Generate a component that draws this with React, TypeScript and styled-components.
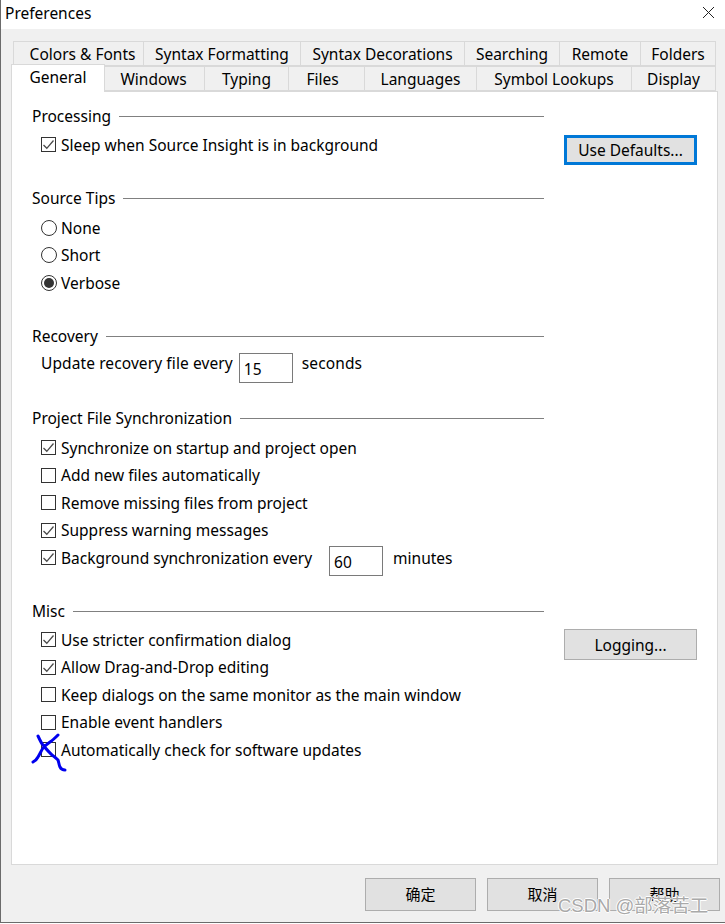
import React from "react";
import styled, { createGlobalStyle } from "styled-components";

const Global = createGlobalStyle`
  html, body { margin: 0; padding: 0; background: #fff; }
  * { box-sizing: border-box; }
`;

const Win = styled.div`
  width: 725px; height: 923px; position: relative; overflow: hidden;
  display: flex; flex-direction: column;
  font-family: "Noto Sans", "Noto Sans CJK SC", sans-serif;
  font-size: 15.5px; color: #000;
  border-left: 1px solid #6b6b6b;
  border-bottom: 1px solid #6b6b6b;
  background: #f0f0f0;
`;
const TitleBar = styled.div`
  height: 29px; background: #fff; display: flex; align-items: center;
  justify-content: space-between; padding: 0 10px 4px 4px;
`;
const Body = styled.div`
  flex: 1; display: flex; flex-direction: column; padding: 12px 0 0 10px;
`;
const TabRow = styled.div<{ $indent: number }>`
  display: flex; height: 25px; margin-left: ${(p) => p.$indent}px; position: relative;
`;
const Tab = styled.div<{ $w: number; $active?: boolean; $nudge?: number }>`
  width: ${(p) => p.$w}px; display: flex; align-items: center; justify-content: center;
  background: ${(p) => (p.$active ? "#fff" : "#f0f0f0")};
  border: 1px solid #d9d9d9; border-left-width: ${(p) => (p.$active ? 1 : 0)}px;
  border-bottom-width: ${(p) => (p.$active ? 0 : 1)}px;
  padding-left: ${(p) => Math.max(p.$nudge ?? 0, 0)}px;
  padding-right: ${(p) => Math.max(-(p.$nudge ?? 0), 0)}px;
  ${(p) => (p.$active ? "margin-top: -2px; height: 28px; z-index: 2; padding-bottom: 4px;" : "")}
  &:first-child { border-left-width: 1px; }
`;
const Panel = styled.div`
  width: 707px; height: 774px; background: #fff; border: 1px solid #d9d9d9;
  padding: 13px 0 0 20px; display: flex; flex-direction: column;
`;
const Section = styled.section<{ $top: number }>`
  display: grid; grid-template-columns: 512px 133px; grid-template-rows: 22px auto; column-gap: 20px;
  margin-top: ${(p) => p.$top}px; align-items: start;
`;
const Heading = styled.div`
  display: flex; align-items: center; gap: 8px; height: 22px;
  &::after { content: ""; flex: 1; height: 1px; background: #808080; }
`;
const Rows = styled.div<{ $pad: number }>`
  grid-column: 1; padding: ${(p) => p.$pad}px 0 0 9px;
`;
const Row = styled.div`
  height: 27.5px; display: flex; align-items: center; gap: 5px; position: relative;
  white-space: nowrap;
`;
const FieldRow = styled.div`
  height: 30px; display: flex; align-items: flex-start; gap: 5px; line-height: 20px;
  white-space: nowrap; letter-spacing: 0.1px;
`;
const Check = styled.span`
  width: 15px; height: 15px; border: 1px solid #333; background: #fff; flex: none;
  display: inline-flex; align-items: center; justify-content: center; position: relative;
`;
const Radio = styled.span<{ $on?: boolean }>`
  width: 16px; height: 16px; border: 1px solid #333; border-radius: 50%; background: #fff; flex: none;
  margin-right: -1px;
  display: inline-flex; align-items: center; justify-content: center;
  &::after { content: ""; width: 10px; height: 10px; border-radius: 50%; background: ${(p) => (p.$on ? "#333" : "transparent")}; }
`;
const Field = styled.span<{ $gap: number; $after: number; $drop?: number }>`
  width: 54px; height: 30px; border: 1px solid #7a7a7a; background: #fff; flex: none;
  display: inline-flex; align-items: center; padding: 2px 0 0 4px;
  margin: ${(p) => p.$drop ?? 0}px ${(p) => p.$after}px 0 ${(p) => p.$gap}px;
`;
const Button = styled.div<{ $focus?: boolean; $top?: number }>`
  grid-column: 2; grid-row: 1 / span 2; width: 133px; height: ${(p) => (p.$focus ? 30 : 31)}px;
  margin-top: ${(p) => p.$top ?? 0}px;
  background: #e1e1e1; border: ${(p) => (p.$focus ? "3px solid #0078d7" : "1px solid #adadad")};
  display: flex; align-items: center; justify-content: center;
`;
const Footer = styled.div`
  display: flex; gap: 11px; justify-content: flex-end; padding: 13px 5px 0 0;
`;
const DialogButton = styled.div`
  width: 111px; height: 33px; background: #e1e1e1; border: 1px solid #adadad;
  display: flex; align-items: center; justify-content: center; font-size: 15px;
  padding-bottom: 3px;
  font-family: "Noto Sans CJK SC", sans-serif;
`;
const Watermark = styled.div`
  position: absolute; left: 557px; top: 891px; font-size: 18.5px; color: #a9a9a9; white-space: nowrap;
  font-family: "Liberation Sans", "Noto Sans CJK SC", sans-serif;
  text-shadow: 1px 0 0 #fff, -1px 0 0 #fff, 0 1px 0 #fff, 0 -1px 0 #fff;
`;
const Scribble = styled.svg`
  position: absolute; left: -9px; top: -8px; overflow: visible; pointer-events: none;
`;
const Tick = () => (
  <svg width="13" height="13" viewBox="0 0 13 13">
    <path d="M1.5 7 L4.8 10.3 L11.5 2.5" fill="none" stroke="#4a4a4a" strokeWidth="1.3" />
  </svg>
);

const back: [string, number, number?][] = [["Colors & Fonts", 131, 8], ["Syntax Formatting", 157], ["Syntax Decorations", 164], ["Searching", 95], ["Remote", 81], ["Folders", 75]];
const front: [string, number, number?][] = [["General", 94], ["Windows", 100, -2], ["Typing", 84], ["Files", 76, -8], ["Languages", 112], ["Symbol Lookups", 155], ["Display", 84]];

const CheckRow = ({ on, children }: { on?: boolean; children: React.ReactNode }) => (
  <Row><Check>{on && <Tick />}</Check><span>{children}</span></Row>
);
const RadioRow = ({ on, children }: { on?: boolean; children: React.ReactNode }) => (
  <Row><Radio $on={on} /><span>{children}</span></Row>
);

export default function App() {
  return (
    <Win>
      <Global />
      <TitleBar>
        <span>Preferences</span>
        <svg width="13" height="13" viewBox="0 0 13 13"><path d="M1 1 L12 12 M12 1 L1 12" stroke="#222" strokeWidth="1" fill="none" /></svg>
      </TitleBar>
      <Body>
        <TabRow $indent={2}>{back.map(([t, w, n]) => <Tab key={t} $w={w} $nudge={n}>{t}</Tab>)}</TabRow>
        <TabRow $indent={0}>{front.map(([t, w, n], i) => <Tab key={t} $w={w} $nudge={n} $active={i === 0}>{t}</Tab>)}</TabRow>
        <Panel>
          <Section $top={0}>
            <Heading>Processing</Heading>
            <Rows $pad={4}><CheckRow on>Sleep when Source Insight is in background</CheckRow></Rows>
            <Button $focus $top={30}>Use Defaults...</Button>
          </Section>
          <Section $top={22}>
            <Heading>Source Tips</Heading>
            <Rows $pad={5}>
              <RadioRow>None</RadioRow>
              <RadioRow>Short</RadioRow>
              <RadioRow on>Verbose</RadioRow>
            </Rows>
          </Section>
          <Section $top={28.5}>
            <Heading>Recovery</Heading>
            <Rows $pad={6}>
              <FieldRow><span>Update recovery file every</span><Field $gap={1} $after={4}>15</Field><span>seconds</span></FieldRow>
            </Rows>
          </Section>
          <Section $top={24}>
            <Heading>Project File Synchronization</Heading>
            <Rows $pad={5}>
              <CheckRow on>Synchronize on startup and project open</CheckRow>
              <CheckRow>Add new files automatically</CheckRow>
              <CheckRow>Remove missing files from project</CheckRow>
              <CheckRow on>Suppress warning messages</CheckRow>
              <Row><Check><Tick /></Check><span>Background synchronization every</span><Field $gap={12} $after={5} $drop={6}>60</Field><span>minutes</span></Row>
            </Rows>
          </Section>
          <Section $top={28.5}>
            <Heading>Misc</Heading>
            <Rows $pad={4}>
              <CheckRow on>Use stricter confirmation dialog</CheckRow>
              <CheckRow on>Allow Drag-and-Drop editing</CheckRow>
              <CheckRow>Keep dialogs on the same monitor as the main window</CheckRow>
              <CheckRow>Enable event handlers</CheckRow>
              <Row>
                <Check>
                  <Scribble width="34" height="37" viewBox="0 0 34 37">
                    <path d="M5 1 C7 5 8 8 10 10 C13 14 16 17 19 20 C22 22 24 24 25 25 C26 28 26 30 27 32 C28 34 30 35 32 35 M25 0 C22 3 20 5 17 7 C14 9 12 11 10 13 C8 16 7 19 5 22 C4 24 2 26 0 27" fill="none" stroke="#0000ee" strokeWidth="3" strokeLinecap="round" />
                  </Scribble>
                </Check>
                <span>Automatically check for software updates</span>
              </Row>
            </Rows>
            <Button $top={29}>Logging...</Button>
          </Section>
        </Panel>
        <Footer>
          <DialogButton>确定</DialogButton>
          <DialogButton>取消</DialogButton>
          <DialogButton>帮助</DialogButton>
        </Footer>
      </Body>
      <Watermark>CSDN @部落苦工</Watermark>
    </Win>
  );
}
